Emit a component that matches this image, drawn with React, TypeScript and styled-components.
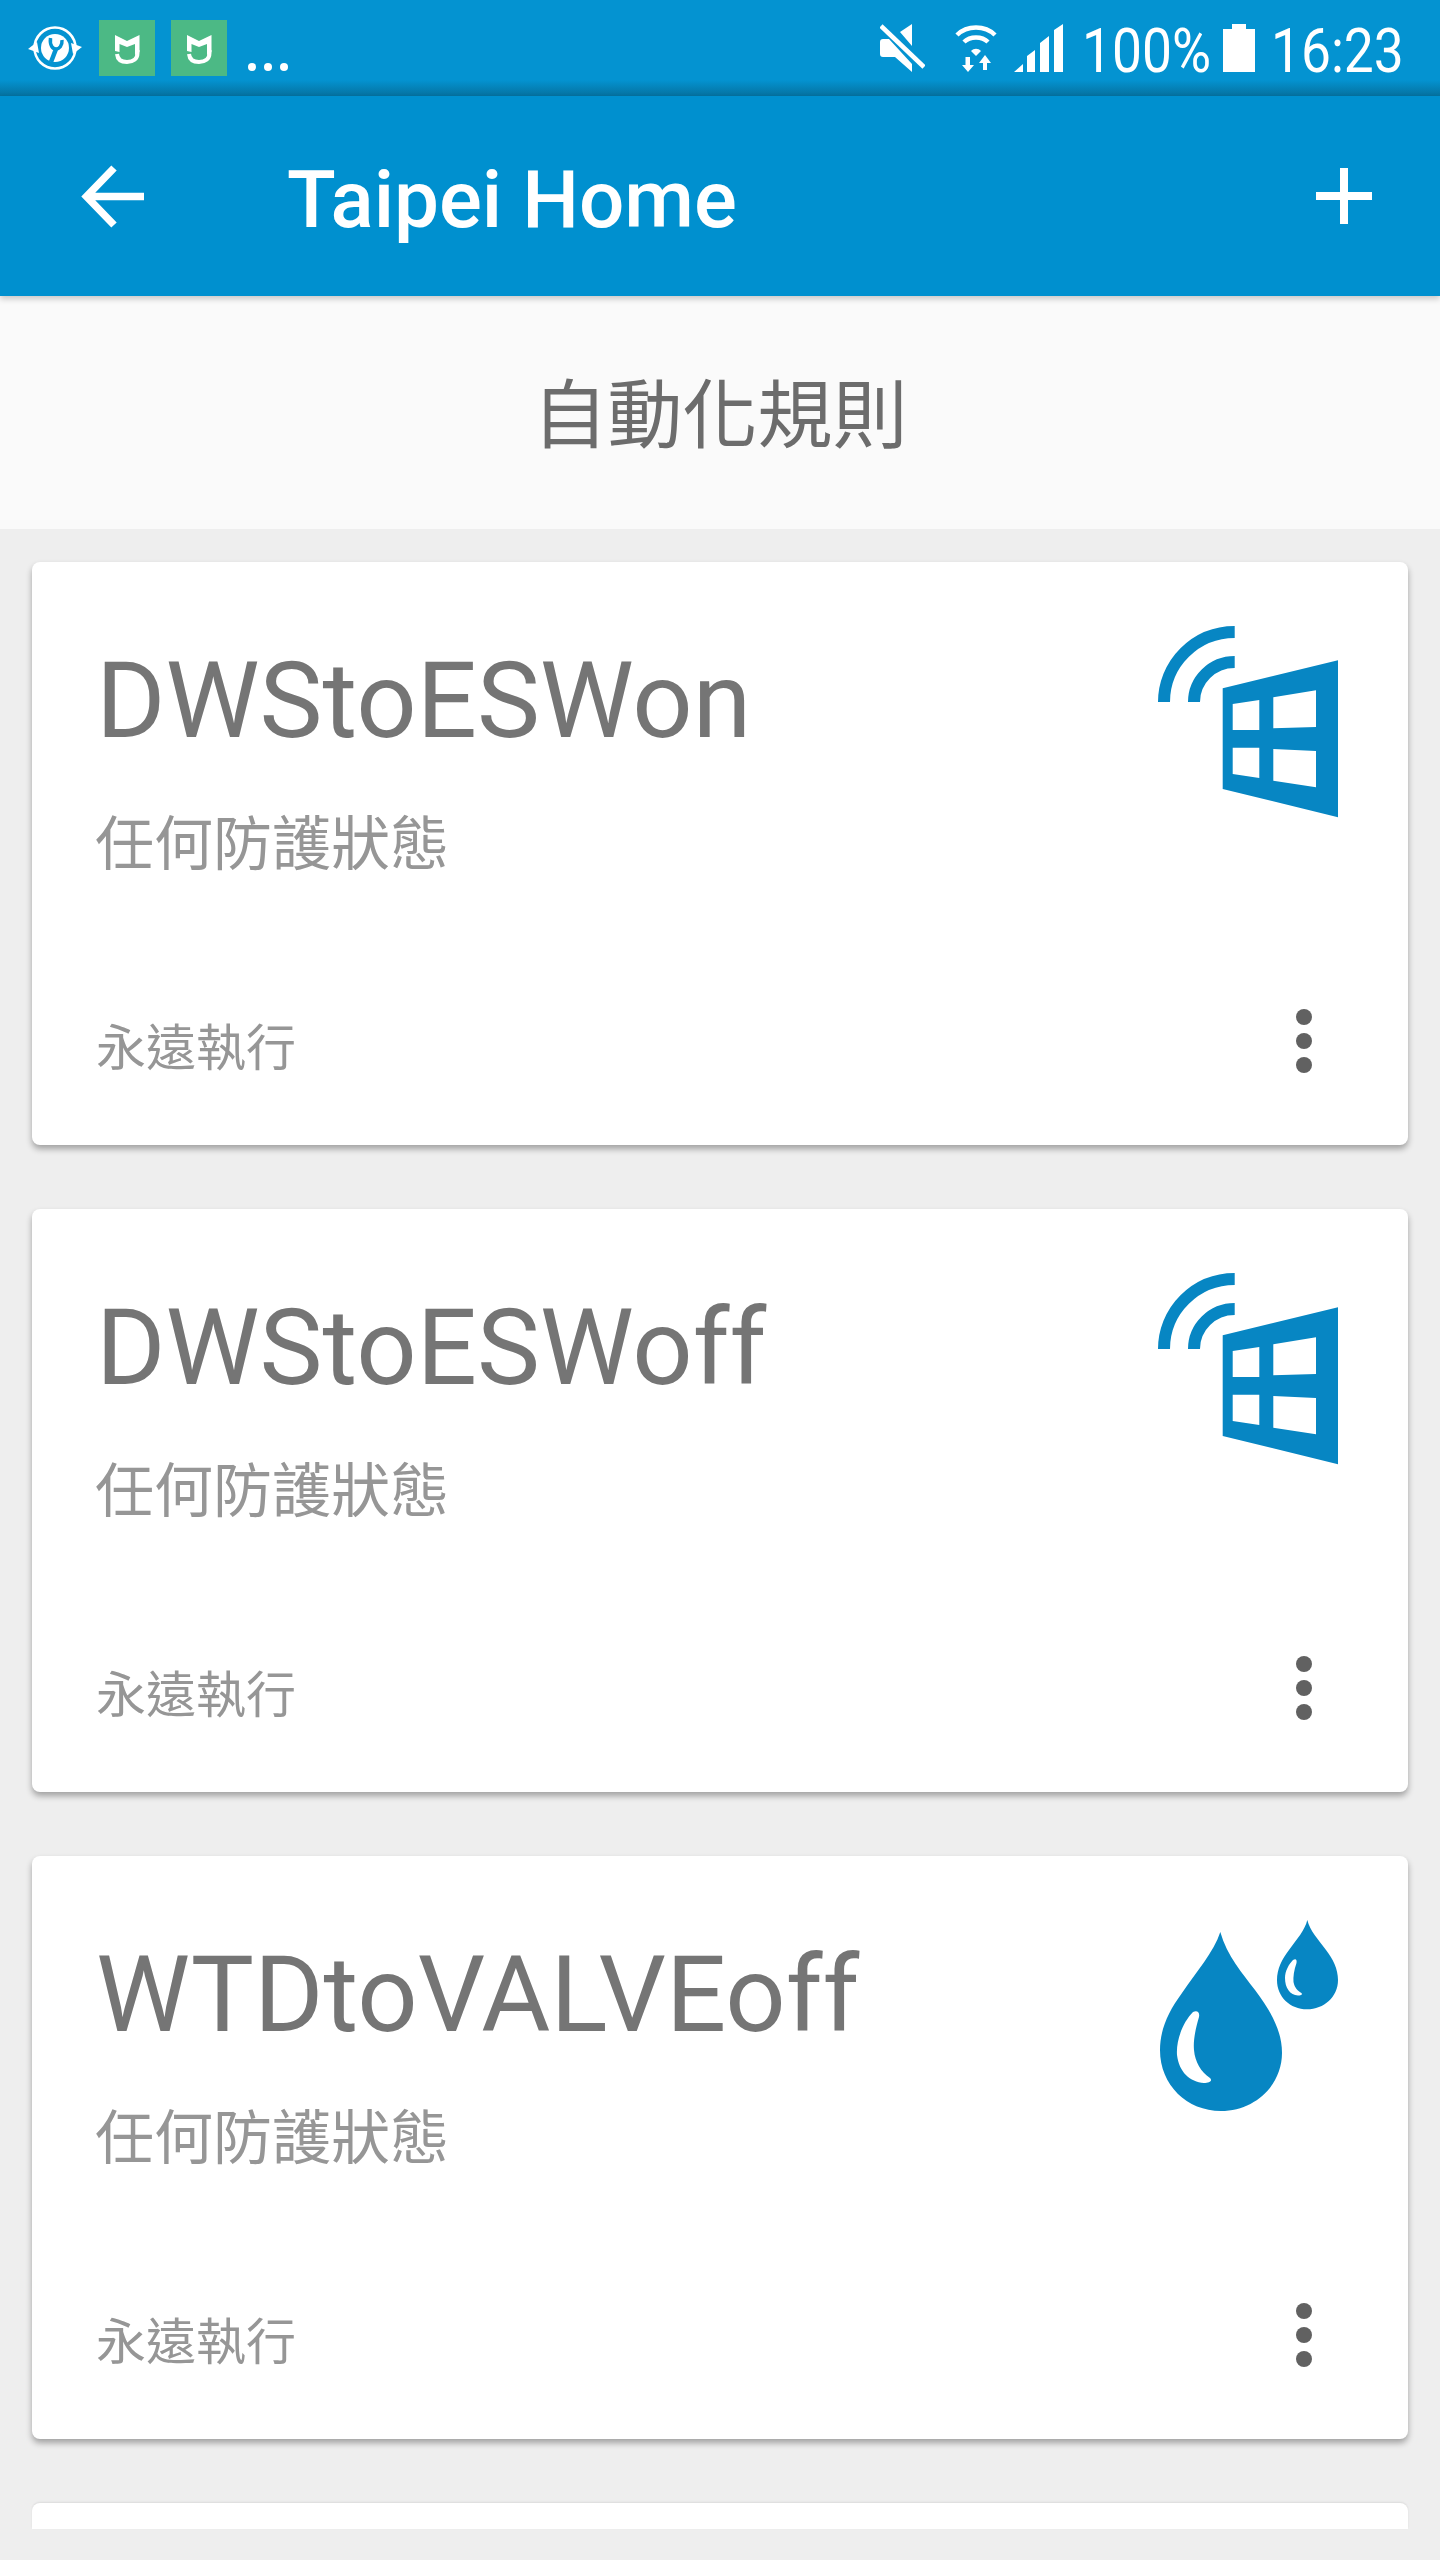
import React from 'react';
import styled, { createGlobalStyle } from 'styled-components';

const GlobalStyle = createGlobalStyle`
  html, body {
    margin: 0;
    padding: 0;
    width: 1440px;
    height: 2560px;
    overflow: hidden;
    background: #eeeeee;
    font-family: Roboto, "Noto Sans CJK TC", sans-serif;
  }
  * { box-sizing: border-box; }
`;

const Screen = styled.div`
  width: 1440px;
  height: 2560px;
  overflow: hidden;
  background: #eeeeee;
  display: flex;
  flex-direction: column;
`;

const StatusBar = styled.div`
  height: 96px;
  flex: none;
  display: flex;
  align-items: center;
  padding: 0 0 0 28px;
  background: linear-gradient(#0493d1 0, #0493d1 80px, #05719f 96px);
  color: #fff;
`;

const GreenTile = styled.div<{ $gap: number }>`
  width: 56px;
  height: 56px;
  margin-left: ${(p) => p.$gap}px;
  background: #4cb985;
  flex: none;
`;

const Dots = styled.div`
  display: flex;
  gap: 8px;
  margin: 38px 0 0 21px;
`;

const Dot = styled.span`
  width: 8px;
  height: 8px;
  border-radius: 50%;
  background: #fff;
`;

const StatusRight = styled.div`
  margin-left: auto;
  display: flex;
  align-items: center;
  height: 48px;
  padding-right: 39px;
`;

const StatusText = styled.span<{ $width: number; $left: number }>`
  display: inline-block;
  width: ${(p) => p.$width}px;
  margin-left: ${(p) => p.$left}px;
  padding-top: 6px;
  font-size: 62px;
  line-height: 48px;
  font-weight: 400;
  white-space: nowrap;
  transform: scaleX(0.86);
  transform-origin: left center;
`;

const Glyph = styled.svg<{ $left?: number }>`
  flex: none;
  display: block;
  margin-left: ${(p) => p.$left ?? 0}px;
`;

const AppBar = styled.div`
  height: 200px;
  flex: none;
  display: flex;
  align-items: center;
  padding: 0 68px 0 81px;
  background: #0090cf;
  box-shadow: 0 3px 6px rgba(0, 0, 0, 0.2);
  position: relative;
  z-index: 2;
  color: #fff;
`;

const AppTitle = styled.div`
  margin-left: 143px;
  padding-top: 8px;
  font-size: 80px;
  font-weight: 500;
  flex: 1;
`;

const SubHeader = styled.div`
  height: 233px;
  flex: none;
  display: flex;
  align-items: center;
  justify-content: center;
  padding-bottom: 6px;
  background: #fafafa;
  color: #6c6c6c;
  font-size: 75px;
  font-family: "Noto Sans CJK TC", sans-serif;
  font-weight: 400;
`;

const CardList = styled.div`
  display: flex;
  flex-direction: column;
  gap: 64px;
  padding: 33px 32px 0;
`;

const Card = styled.div<{ $stub?: boolean }>`
  height: ${(p) => (p.$stub ? '26px' : '583px')};
  flex: none;
  display: flex;
  flex-direction: column;
  background: #fff;
  border-radius: ${(p) => (p.$stub ? '8px 8px 0 0' : '8px')};
  box-shadow: ${(p) =>
    p.$stub ? '0 -1px 2px rgba(0,0,0,0.08)' : '0 4px 6px rgba(0,0,0,0.32)'};
`;

const CardTop = styled.div`
  height: 240px;
  margin: 38px 38px 0 66px;
  display: flex;
  justify-content: space-between;
`;

const CardText = styled.div`
  display: flex;
  flex-direction: column;
`;

const RuleName = styled.div`
  margin: 41px 0 0 -2px;
  font-size: 106px;
  line-height: 120px;
  color: #757575;
`;

const RuleMode = styled.div`
  margin: 41px 0 0 -3px;
  font-size: 59px;
  line-height: 76px;
  font-family: "Noto Sans CJK TC", sans-serif;
  font-weight: 400;
  color: #969696;
`;

const CardFooter = styled.div`
  margin: 166px 94px 0 66px;
  display: flex;
  align-items: center;
  justify-content: space-between;
  height: 70px;
`;

const RunTime = styled.div`
  margin-left: -2px;
  padding-top: 6px;
  font-size: 50px;
  font-family: "Noto Sans CJK TC", sans-serif;
  font-weight: 400;
  color: #969696;
`;

const BLUE = '#0786c3';

function WindowIcon() {
  return (
    <Glyph width="240" height="240" viewBox="0 0 240 240">
      <path
        fill={BLUE}
        fillRule="evenodd"
        d="M92.7 88.3L208 60.3V217.3L92.7 189ZM102.7 104V130H129.3V100ZM143.3 97.3V128.3L186 127V90.3ZM102.7 147.700V174L129.3 178V147.700ZM143.3 149V180.7L186 187.3V151Z"
      />
      <path
        fill="none"
        stroke={BLUE}
        strokeWidth="12"
        d="M34 102A70.7 70 0 0 1 104.7 32M64 102A40.7 40 0 0 1 104.7 62"
      />
    </Glyph>
  );
}

function DropsIcon() {
  return (
    <Glyph width="240" height="240" viewBox="0 4 240 240">
      <path
        fill={BLUE}
        fillRule="evenodd"
        d="M90.3 42C84 62 66 82 52 103C38 122 30 140 30 160C30 195 57 221 91 221C125 221 152 195 152 163C152 140 140 120 125 100C113 84 97 66 90.3 42ZM63 122C67 120 70 122 69 127C66 137 63 150 64 160C65 172 71 182 80 188C83 191 79 193 74 193C60 192 49 182 47 165C46 150 53 132 63 122Z"
      />
      <path
        fill={BLUE}
        fillRule="evenodd"
        d="M177.3 30C175 40 167 49 159 60C152 69 147 79 147 90C147 107 160 119.3 177 119.3C194 119.3 208 107 208 90C208 79 203 69 196 60C188 49 180 41 177.3 30ZM163 70C166 68 167 70 166.500 73C164 80 163 87 163.500 92C164.500 98 168 101 171.500 103C173 105 170 105.500 168 105.500C160 105 155 98 155 88C155 81 159 74 163 70Z"
      />
    </Glyph>
  );
}

function Kebab() {
  return (
    <Glyph width="20" height="64" viewBox="0 0 20 64">
      <circle cx="10" cy="8" r="8" fill="#616161" />
      <circle cx="10" cy="32" r="8" fill="#616161" />
      <circle cx="10" cy="56" r="8" fill="#616161" />
    </Glyph>
  );
}

function MiLogo() {
  return (
    <svg width="56" height="56" viewBox="0 0 56 56">
      <path
        fill="#fff"
        d="M16 15L28 21L40.500 15V32L36 35V24L28 27L20.500 24V32L16 31Z"
      />
      <path
        fill="none"
        stroke="#fff"
        strokeWidth="4"
        d="M38.500 30V33C38.500 39 34 42 28 42C22 42 18.500 39 18 34"
      />
    </svg>
  );
}

function SyncWrench() {
  return (
    <Glyph width="54" height="46" viewBox="0 0 54 46">
      <circle cx="27" cy="23" r="20.500" fill="none" stroke="#fff" strokeWidth="2.500" />
      <circle cx="27" cy="23" r="14" fill="#fff" />
      <path
        fill="none"
        stroke="#0493d1"
        strokeWidth="3.500"
        d="M22.500 13C21.500 21 25 24 28 24C31 24 34.500 21 34 15"
      />
      <path fill="none" stroke="#0493d1" strokeWidth="4.500" d="M28 24L23 37" />
      <path fill="#fff" d="M0 24L9 17L11 28ZM54 22L45 29L43 18Z" />
    </Glyph>
  );
}

function MuteIcon() {
  return (
    <Glyph width="45" height="48" viewBox="0 0 45 48">
      <path
        fill="#fff"
        d="M0 18Q0 15 3 15H9L32 40V48L15 33H3Q0 33 0 30ZM20 8L32 0V22Z"
      />
      <path fill="none" stroke="#fff" strokeWidth="4.500" d="M1 2L44 43" />
    </Glyph>
  );
}

function WifiIcon() {
  return (
    <Glyph $left={30} width="42" height="49" viewBox="0 0 42 49">
      <path
        fill="none"
        stroke="#fff"
        strokeWidth="4.500"
        d="M2 11C12 1 30 1 40 11M9 18C15 12 27 12 33 18"
      />
      <path fill="#fff" d="M16 27C19 24 23 24 26 27L21 32Z" />
      <path
        fill="#fff"
        d="M10.500 33H15V41H19L13 48L7 41H10.500ZM28 46V39H24L30 31L36 39H32V46Z"
      />
    </Glyph>
  );
}

function SignalIcon() {
  return (
    <Glyph $left={17} width="49" height="48" viewBox="0 0 49 48">
      <path
        fill="#fff"
        d="M0 48L9 40V48ZM13 48V32L21 26V48ZM26 48V19L35 12V48ZM40 48V6L49 0V48Z"
      />
    </Glyph>
  );
}

function BatteryIcon() {
  return (
    <Glyph width="32" height="48" viewBox="0 0 32 48">
      <path fill="#fff" d="M9 0H23V5H32V48H0V5H9Z" />
    </Glyph>
  );
}

function BackArrow() {
  return (
    <Glyph width="63" height="63" viewBox="0 0 63 63">
      <path fill="none" stroke="#fff" strokeWidth="7.500" d="M63 31.500H6M33 3L5.500 31.500L33 60" />
    </Glyph>
  );
}

function PlusIcon() {
  return (
    <Glyph width="56" height="56" viewBox="0 0 56 56">
      <path fill="none" stroke="#fff" strokeWidth="8" d="M28 0V56M0 28H56" />
    </Glyph>
  );
}

const rules = [
  { name: 'DWStoESWon', icon: <WindowIcon /> },
  { name: 'DWStoESWoff', icon: <WindowIcon /> },
  { name: 'WTDtoVALVEoff', icon: <DropsIcon /> },
];

export default function App() {
  return (
    <Screen>
      <GlobalStyle />
      <StatusBar>
        <SyncWrench />
        <GreenTile $gap={17}>
          <MiLogo />
        </GreenTile>
        <GreenTile $gap={16}>
          <MiLogo />
        </GreenTile>
        <Dots>
          <Dot />
          <Dot />
          <Dot />
        </Dots>
        <StatusRight>
          <MuteIcon />
          <WifiIcon />
          <SignalIcon />
          <StatusText $width={141} $left={19}>100%</StatusText>
          <BatteryIcon />
          <StatusText $width={130} $left={16}>16:23</StatusText>
        </StatusRight>
      </StatusBar>
      <AppBar>
        <BackArrow />
        <AppTitle>Taipei Home</AppTitle>
        <PlusIcon />
      </AppBar>
      <SubHeader>自動化規則</SubHeader>
      <CardList>
        {rules.map((rule) => (
          <Card key={rule.name}>
            <CardTop>
              <CardText>
                <RuleName>{rule.name}</RuleName>
                <RuleMode>任何防護狀態</RuleMode>
              </CardText>
              {rule.icon}
            </CardTop>
            <CardFooter>
              <RunTime>永遠執行</RunTime>
              <Kebab />
            </CardFooter>
          </Card>
        ))}
        <Card $stub />
      </CardList>
    </Screen>
  );
}
